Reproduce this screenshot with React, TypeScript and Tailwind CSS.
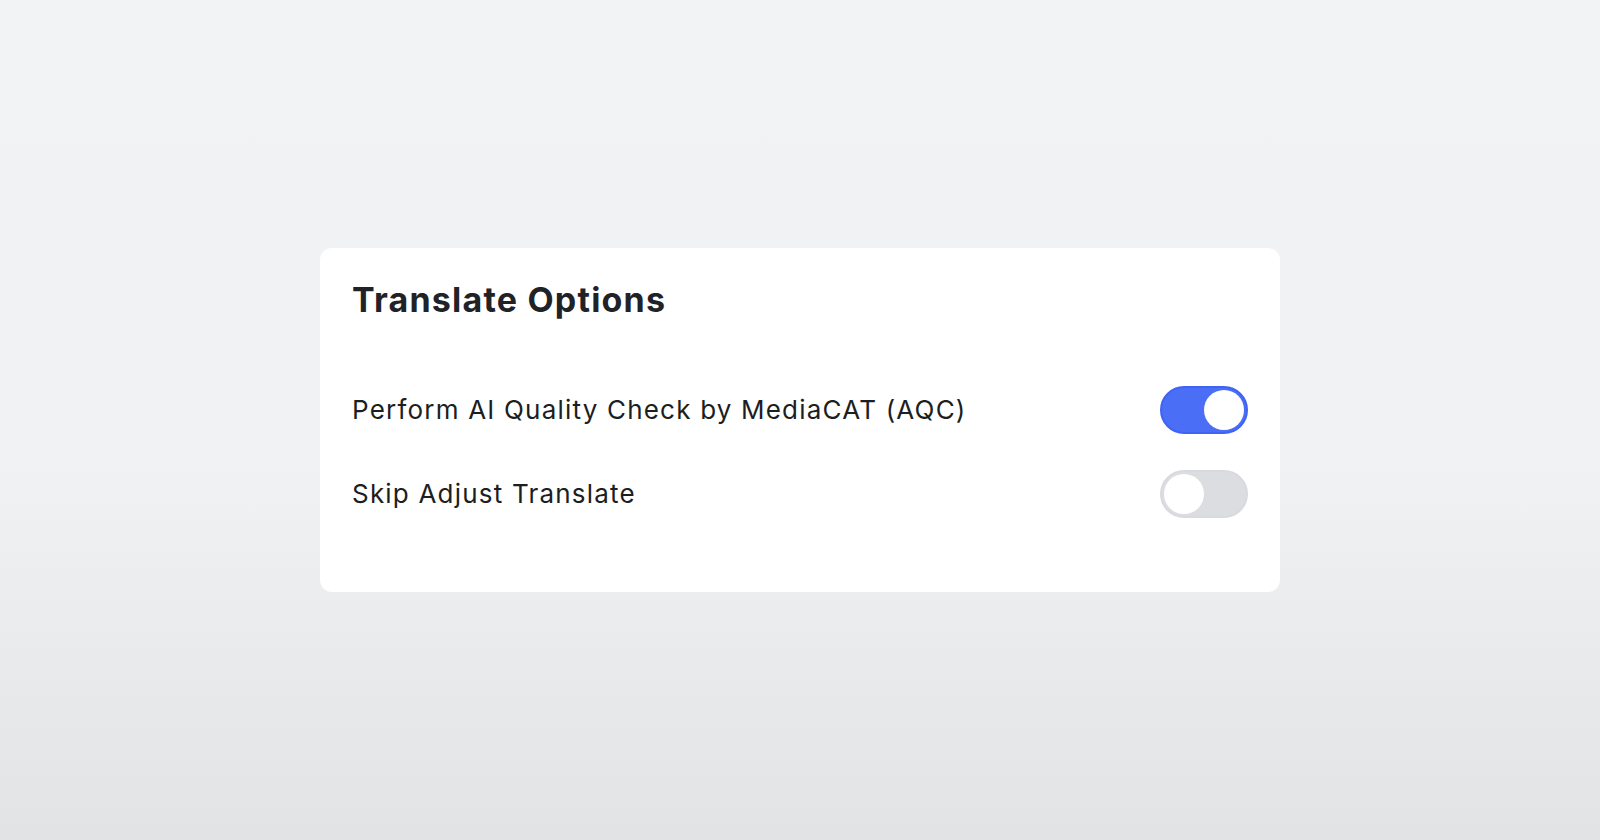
import React, { useState } from 'react';

const Toggle = ({ on, onChange }: { on: boolean; onChange: () => void }) => (
  <button
    type="button"
    onClick={onChange}
    className={`relative flex h-12 w-[88px] shrink-0 items-center rounded-full border-2 p-[2px] transition-colors ${
      on ? 'justify-end border-[#3f64f3] bg-[#4a6ef6]' : 'justify-start border-[#d9dadd] bg-[#dcdde0]'
    }`}
  >
    <span className="block h-10 w-10 rounded-full bg-white" />
  </button>
);

const App: React.FC = () => {
  const [aqc, setAqc] = useState(true);
  const [skip, setSkip] = useState(false);

  return (
    <div
      className="flex min-h-screen items-center justify-center bg-[linear-gradient(180deg,#f2f3f5_0%,#f1f2f4_55%,#e2e3e5_100%)]"
      style={{ fontFamily: 'Inter, "Noto Sans", sans-serif' }}
    >
      <div className="w-[960px] rounded-xl bg-white px-8 pt-8 pb-14">
        <h2 className="text-[34px] leading-10 font-bold tracking-[1.2px] text-[#1f2328]">Translate Options</h2>

        <div className="mt-12">
          <div className="flex items-center justify-between py-[18px]">
            <span className="text-[26px] leading-8 tracking-[1.2px] text-[#1b1e22]">
              Perform AI Quality Check by MediaCAT (AQC)
            </span>
            <Toggle on={aqc} onChange={() => setAqc(!aqc)} />
          </div>
          <div className="flex items-center justify-between py-[18px]">
            <span className="text-[26px] leading-8 tracking-[1.2px] text-[#1b1e22]">Skip Adjust Translate</span>
            <Toggle on={skip} onChange={() => setSkip(!skip)} />
          </div>
        </div>
      </div>
    </div>
  );
};

export default App;
